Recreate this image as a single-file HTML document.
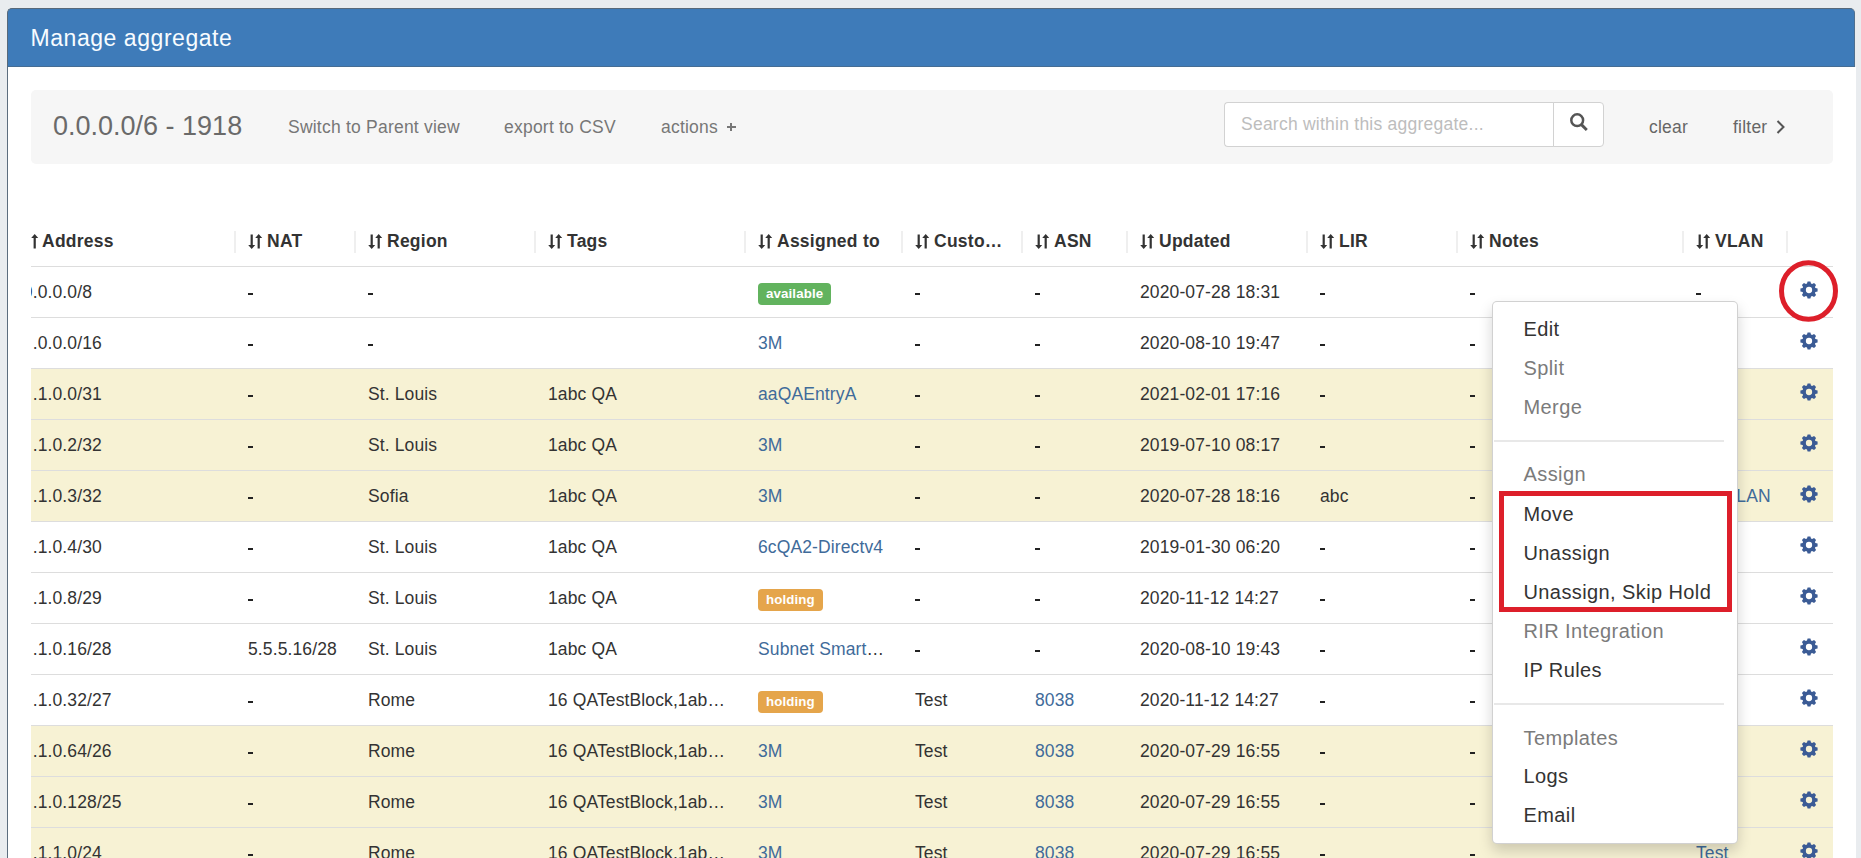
<!DOCTYPE html>
<html><head><meta charset="utf-8"><title>Manage aggregate</title>
<style>
html,body{margin:0;padding:0}
body{width:1861px;height:858px;overflow:hidden;background:#e9ecef;position:relative;font-family:"Liberation Sans",sans-serif;color:#333}
.abs{position:absolute}
#pbody{position:absolute;left:7px;top:67px;width:1849px;height:800px;box-sizing:border-box;border-left:1px solid #5c6d7e;background:#fff}
#phead{position:absolute;left:7px;top:8px;width:1848px;height:59px;box-sizing:border-box;background:#3e7bb9;border-top:1px solid #58697a;border-left:1px solid #58697a;border-right:1px solid #4f6f8f;border-bottom:1px solid #456d94;border-radius:5px 5px 0 0}
#ptitle{position:absolute;left:22.5px;top:16px;font-size:23px;letter-spacing:0.55px;line-height:26px;color:#f7fcff;white-space:nowrap}
#well{position:absolute;left:31px;top:90px;width:1802px;height:74px;background:#f6f6f6;border-radius:5px}
.wt{position:absolute;white-space:nowrap;color:#777;font-size:17.5px;letter-spacing:0.22px;line-height:20px}
#agg{position:absolute;left:53px;top:111px;font-size:27px;line-height:30px;color:#6a6a6a;white-space:nowrap}
#search{position:absolute;left:1224px;top:102px;width:330px;height:45px;box-sizing:border-box;border:1px solid #d2d2d2;border-right:none;border-radius:4px 0 0 4px;background:#fff}
#sbtn{position:absolute;left:1553px;top:102px;width:51px;height:45px;box-sizing:border-box;border:1px solid #d2d2d2;border-radius:0 4px 4px 0;background:#fff}
#ph{position:absolute;left:1241px;top:114px;font-size:17.5px;letter-spacing:0.24px;line-height:20px;color:#bdbdbd;white-space:nowrap}
#tbl{position:absolute;left:31px;top:200px;width:1802px;height:700px;overflow:hidden}
.hd{position:absolute;top:0;font-weight:bold;font-size:17.5px;letter-spacing:0.25px;line-height:20px;white-space:nowrap;color:#333}
.sep{position:absolute;width:2px;top:31px;height:22px;background:#efefef}
.row{position:absolute;left:0;width:1802px;height:50px;border-top:1px solid #ddd}
.y{background:#f7f2d4}
.c{position:absolute;top:0;line-height:50px;font-size:17.5px;letter-spacing:0.12px;white-space:nowrap;color:#333}
.c a{color:#3f6b9a;text-decoration:none}
.lbl{display:inline-block;vertical-align:top;margin-top:16px;height:22px;line-height:22px;padding:0 8px;border-radius:4px;color:#fff;font-weight:bold;font-size:13.3px}
.g{background:#62b35e}
.o{background:#e5a54b}
.si{position:absolute;top:34px}
.gear{position:absolute}
.dash{position:absolute;top:26px;width:5px;height:2px;background:#222}
#menu{position:absolute;left:1492px;top:301px;width:246px;height:543px;box-sizing:border-box;background:#fff;border:1px solid rgba(0,0,0,.18);border-radius:5px;box-shadow:0 7px 14px rgba(0,0,0,.17)}
.mi{position:absolute;left:30.5px;font-size:20px;letter-spacing:0.4px;line-height:24px;white-space:nowrap;color:#333}
.dis{color:#7b7b7b}
.div{position:absolute;left:1px;width:230px;height:2px;background:#e8e8e8}
</style></head><body>
<svg width="0" height="0" style="position:absolute"><defs>
<g id="cog"><path fill="#3b5b95" fill-rule="evenodd" d="M-2.00 -6.39 L-1.40 -8.59 L1.40 -8.59 L2.00 -6.39 L3.11 -5.94 L5.08 -7.06 L7.06 -5.08 L5.94 -3.11 L6.39 -2.00 L8.59 -1.40 L8.59 1.40 L6.39 2.00 L5.94 3.11 L7.06 5.08 L5.08 7.06 L3.11 5.94 L2.00 6.39 L1.40 8.59 L-1.40 8.59 L-2.00 6.39 L-3.11 5.94 L-5.08 7.06 L-7.06 5.08 L-5.94 3.11 L-6.39 2.00 L-8.59 1.40 L-8.59 -1.40 L-6.39 -2.00 L-5.94 -3.11 L-7.06 -5.08 L-5.08 -7.06 L-3.11 -5.94Z M3.15 0 A3.15 3.15 0 1 0 -3.15 0 A3.15 3.15 0 1 0 3.15 0Z"/></g>
</defs></svg>
<div id="pbody"></div>
<div id="phead"><div id="ptitle">Manage aggregate</div></div>
<div id="well"></div>
<div id="agg">0.0.0.0/6 - 1918</div>
<div class="wt" style="left:288px;top:117px">Switch to Parent view</div>
<div class="wt" style="left:504px;top:117px">export to CSV</div>
<div class="wt" style="left:661px;top:117px">actions</div><div class="abs" style="left:727px;top:126px;width:8.5px;height:2px;background:#777"></div><div class="abs" style="left:730.2px;top:123px;width:2px;height:8px;background:#777"></div>
<div id="search"></div><div id="sbtn"></div>
<div id="ph">Search within this aggregate...</div>
<svg class="abs" style="left:1565px;top:108px" width="26" height="26" viewBox="1565 108 26 26"><circle cx="1577.2" cy="120.2" r="5.9" fill="none" stroke="#555" stroke-width="2.5"/><path d="M1581.2 124.4l5.6 5.6" stroke="#555" stroke-width="2.9"/></svg>
<div class="wt" style="left:1649px;top:117px;color:#666">clear</div>
<div class="wt" style="left:1733px;top:117px;color:#666">filter</div>
<svg class="abs" style="left:1775px;top:119px" width="12" height="16" viewBox="0 0 12 16"><path d="M2.5 2l6 6-6 6" fill="none" stroke="#555" stroke-width="2"/></svg>

<div id='tbl'>
<svg class='si' style='left:0px' width='16' height='16' viewBox='0 0 16 16'><path d='M2.6 14.5h2.2V4h2.4L3.7 0 0.2 4h2.4z' fill='#333'/></svg>
<div class='hd' style='left:11px;top:31px'>Address</div>
<svg class='si' style='left:217px' width='16' height='16' viewBox='0 0 16 16'><path d='M2.6 0.5h2.2v10.5h2.4L3.7 15 0.2 11h2.4z' fill='#333'/><path d='M9.6 14.5h2.2V4h2.4L10.7 0 7.2 4h2.4z' fill='#333'/></svg>
<div class='hd' style='left:236px;top:31px'>NAT</div>
<div class='sep' style='left:203px'></div>
<svg class='si' style='left:337px' width='16' height='16' viewBox='0 0 16 16'><path d='M2.6 0.5h2.2v10.5h2.4L3.7 15 0.2 11h2.4z' fill='#333'/><path d='M9.6 14.5h2.2V4h2.4L10.7 0 7.2 4h2.4z' fill='#333'/></svg>
<div class='hd' style='left:356px;top:31px'>Region</div>
<div class='sep' style='left:323px'></div>
<svg class='si' style='left:517px' width='16' height='16' viewBox='0 0 16 16'><path d='M2.6 0.5h2.2v10.5h2.4L3.7 15 0.2 11h2.4z' fill='#333'/><path d='M9.6 14.5h2.2V4h2.4L10.7 0 7.2 4h2.4z' fill='#333'/></svg>
<div class='hd' style='left:536px;top:31px'>Tags</div>
<div class='sep' style='left:503px'></div>
<svg class='si' style='left:727px' width='16' height='16' viewBox='0 0 16 16'><path d='M2.6 0.5h2.2v10.5h2.4L3.7 15 0.2 11h2.4z' fill='#333'/><path d='M9.6 14.5h2.2V4h2.4L10.7 0 7.2 4h2.4z' fill='#333'/></svg>
<div class='hd' style='left:746px;top:31px'>Assigned to</div>
<div class='sep' style='left:713px'></div>
<svg class='si' style='left:884px' width='16' height='16' viewBox='0 0 16 16'><path d='M2.6 0.5h2.2v10.5h2.4L3.7 15 0.2 11h2.4z' fill='#333'/><path d='M9.6 14.5h2.2V4h2.4L10.7 0 7.2 4h2.4z' fill='#333'/></svg>
<div class='hd' style='left:903px;top:31px'>Custo…</div>
<div class='sep' style='left:870px'></div>
<svg class='si' style='left:1004px' width='16' height='16' viewBox='0 0 16 16'><path d='M2.6 0.5h2.2v10.5h2.4L3.7 15 0.2 11h2.4z' fill='#333'/><path d='M9.6 14.5h2.2V4h2.4L10.7 0 7.2 4h2.4z' fill='#333'/></svg>
<div class='hd' style='left:1023px;top:31px'>ASN</div>
<div class='sep' style='left:990px'></div>
<svg class='si' style='left:1109px' width='16' height='16' viewBox='0 0 16 16'><path d='M2.6 0.5h2.2v10.5h2.4L3.7 15 0.2 11h2.4z' fill='#333'/><path d='M9.6 14.5h2.2V4h2.4L10.7 0 7.2 4h2.4z' fill='#333'/></svg>
<div class='hd' style='left:1128px;top:31px'>Updated</div>
<div class='sep' style='left:1095px'></div>
<svg class='si' style='left:1289px' width='16' height='16' viewBox='0 0 16 16'><path d='M2.6 0.5h2.2v10.5h2.4L3.7 15 0.2 11h2.4z' fill='#333'/><path d='M9.6 14.5h2.2V4h2.4L10.7 0 7.2 4h2.4z' fill='#333'/></svg>
<div class='hd' style='left:1308px;top:31px'>LIR</div>
<div class='sep' style='left:1275px'></div>
<svg class='si' style='left:1439px' width='16' height='16' viewBox='0 0 16 16'><path d='M2.6 0.5h2.2v10.5h2.4L3.7 15 0.2 11h2.4z' fill='#333'/><path d='M9.6 14.5h2.2V4h2.4L10.7 0 7.2 4h2.4z' fill='#333'/></svg>
<div class='hd' style='left:1458px;top:31px'>Notes</div>
<div class='sep' style='left:1425px'></div>
<svg class='si' style='left:1665px' width='16' height='16' viewBox='0 0 16 16'><path d='M2.6 0.5h2.2v10.5h2.4L3.7 15 0.2 11h2.4z' fill='#333'/><path d='M9.6 14.5h2.2V4h2.4L10.7 0 7.2 4h2.4z' fill='#333'/></svg>
<div class='hd' style='left:1684px;top:31px'>VLAN</div>
<div class='sep' style='left:1651px'></div>
<div class='sep' style='left:1755px'></div>
<div class='row' style='top:66px'>
<div class='c' style='left:-8.2px'>0.0.0.0/8</div>
<div class='dash' style='left:217px'></div>
<div class='dash' style='left:337px'></div>
<div class='c' style='left:727px'><span class='lbl g'>available</span></div>
<div class='dash' style='left:884px'></div>
<div class='dash' style='left:1004px'></div>
<div class='c' style='left:1109px'>2020-07-28 18:31</div>
<div class='dash' style='left:1289px'></div>
<div class='dash' style='left:1439px'></div>
<div class='dash' style='left:1665px'></div>
</div>
<div class='row' style='top:117px'>
<div class='c' style='left:-8.2px'><span style='visibility:hidden'>1</span>.0.0.0/16</div>
<div class='dash' style='left:217px'></div>
<div class='dash' style='left:337px'></div>
<div class='c' style='left:727px'><a>3M</a></div>
<div class='dash' style='left:884px'></div>
<div class='dash' style='left:1004px'></div>
<div class='c' style='left:1109px'>2020-08-10 19:47</div>
<div class='dash' style='left:1289px'></div>
<div class='dash' style='left:1439px'></div>
</div>
<div class='row y' style='top:168px'>
<div class='c' style='left:-8.2px'><span style='visibility:hidden'>1</span>.1.0.0/31</div>
<div class='dash' style='left:217px'></div>
<div class='c' style='left:337px'>St. Louis</div>
<div class='c' style='left:517px'>1abc QA</div>
<div class='c' style='left:727px'><a>aaQAEntryA</a></div>
<div class='dash' style='left:884px'></div>
<div class='dash' style='left:1004px'></div>
<div class='c' style='left:1109px'>2021-02-01 17:16</div>
<div class='dash' style='left:1289px'></div>
<div class='dash' style='left:1439px'></div>
</div>
<div class='row y' style='top:219px'>
<div class='c' style='left:-8.2px'><span style='visibility:hidden'>1</span>.1.0.2/32</div>
<div class='dash' style='left:217px'></div>
<div class='c' style='left:337px'>St. Louis</div>
<div class='c' style='left:517px'>1abc QA</div>
<div class='c' style='left:727px'><a>3M</a></div>
<div class='dash' style='left:884px'></div>
<div class='dash' style='left:1004px'></div>
<div class='c' style='left:1109px'>2019-07-10 08:17</div>
<div class='dash' style='left:1289px'></div>
<div class='dash' style='left:1439px'></div>
</div>
<div class='row y' style='top:270px'>
<div class='c' style='left:-8.2px'><span style='visibility:hidden'>1</span>.1.0.3/32</div>
<div class='dash' style='left:217px'></div>
<div class='c' style='left:337px'>Sofia</div>
<div class='c' style='left:517px'>1abc QA</div>
<div class='c' style='left:727px'><a>3M</a></div>
<div class='dash' style='left:884px'></div>
<div class='dash' style='left:1004px'></div>
<div class='c' style='left:1109px'>2020-07-28 18:16</div>
<div class='c' style='left:1289px'>abc</div>
<div class='dash' style='left:1439px'></div>
<div class='c' style='left:1665px'><a>abcVLAN</a></div>
</div>
<div class='row' style='top:321px'>
<div class='c' style='left:-8.2px'><span style='visibility:hidden'>1</span>.1.0.4/30</div>
<div class='dash' style='left:217px'></div>
<div class='c' style='left:337px'>St. Louis</div>
<div class='c' style='left:517px'>1abc QA</div>
<div class='c' style='left:727px'><a>6cQA2-Directv4</a></div>
<div class='dash' style='left:884px'></div>
<div class='dash' style='left:1004px'></div>
<div class='c' style='left:1109px'>2019-01-30 06:20</div>
<div class='dash' style='left:1289px'></div>
<div class='dash' style='left:1439px'></div>
</div>
<div class='row' style='top:372px'>
<div class='c' style='left:-8.2px'><span style='visibility:hidden'>1</span>.1.0.8/29</div>
<div class='dash' style='left:217px'></div>
<div class='c' style='left:337px'>St. Louis</div>
<div class='c' style='left:517px'>1abc QA</div>
<div class='c' style='left:727px'><span class='lbl o'>holding</span></div>
<div class='dash' style='left:884px'></div>
<div class='dash' style='left:1004px'></div>
<div class='c' style='left:1109px'>2020-11-12 14:27</div>
<div class='dash' style='left:1289px'></div>
<div class='dash' style='left:1439px'></div>
</div>
<div class='row' style='top:423px'>
<div class='c' style='left:-8.2px'><span style='visibility:hidden'>1</span>.1.0.16/28</div>
<div class='c' style='left:217px'>5.5.5.16/28</div>
<div class='c' style='left:337px'>St. Louis</div>
<div class='c' style='left:517px'>1abc QA</div>
<div class='c' style='left:727px'><a>Subnet Smart</a>…</div>
<div class='dash' style='left:884px'></div>
<div class='dash' style='left:1004px'></div>
<div class='c' style='left:1109px'>2020-08-10 19:43</div>
<div class='dash' style='left:1289px'></div>
<div class='dash' style='left:1439px'></div>
</div>
<div class='row' style='top:474px'>
<div class='c' style='left:-8.2px'><span style='visibility:hidden'>1</span>.1.0.32/27</div>
<div class='dash' style='left:217px'></div>
<div class='c' style='left:337px'>Rome</div>
<div class='c' style='left:517px'>16 QATestBlock,1ab…</div>
<div class='c' style='left:727px'><span class='lbl o'>holding</span></div>
<div class='c' style='left:884px'>Test</div>
<div class='c' style='left:1004px'><a>8038</a></div>
<div class='c' style='left:1109px'>2020-11-12 14:27</div>
<div class='dash' style='left:1289px'></div>
<div class='dash' style='left:1439px'></div>
</div>
<div class='row y' style='top:525px'>
<div class='c' style='left:-8.2px'><span style='visibility:hidden'>1</span>.1.0.64/26</div>
<div class='dash' style='left:217px'></div>
<div class='c' style='left:337px'>Rome</div>
<div class='c' style='left:517px'>16 QATestBlock,1ab…</div>
<div class='c' style='left:727px'><a>3M</a></div>
<div class='c' style='left:884px'>Test</div>
<div class='c' style='left:1004px'><a>8038</a></div>
<div class='c' style='left:1109px'>2020-07-29 16:55</div>
<div class='dash' style='left:1289px'></div>
<div class='dash' style='left:1439px'></div>
</div>
<div class='row y' style='top:576px'>
<div class='c' style='left:-8.2px'><span style='visibility:hidden'>1</span>.1.0.128/25</div>
<div class='dash' style='left:217px'></div>
<div class='c' style='left:337px'>Rome</div>
<div class='c' style='left:517px'>16 QATestBlock,1ab…</div>
<div class='c' style='left:727px'><a>3M</a></div>
<div class='c' style='left:884px'>Test</div>
<div class='c' style='left:1004px'><a>8038</a></div>
<div class='c' style='left:1109px'>2020-07-29 16:55</div>
<div class='dash' style='left:1289px'></div>
<div class='dash' style='left:1439px'></div>
</div>
<div class='row y' style='top:627px'>
<div class='c' style='left:-8.2px'><span style='visibility:hidden'>1</span>.1.1.0/24</div>
<div class='dash' style='left:217px'></div>
<div class='c' style='left:337px'>Rome</div>
<div class='c' style='left:517px'>16 QATestBlock,1ab…</div>
<div class='c' style='left:727px'><a>3M</a></div>
<div class='c' style='left:884px'>Test</div>
<div class='c' style='left:1004px'><a>8038</a></div>
<div class='c' style='left:1109px'>2020-07-29 16:55</div>
<div class='dash' style='left:1289px'></div>
<div class='dash' style='left:1439px'></div>
<div class='c' style='left:1665px'><a>Test</a></div>
</div>
</div>
<svg class='gear' style='left:1799.5px;top:281px' width='18' height='18' viewBox='-9 -9 18 18'><use href='#cog'/></svg>
<svg class='gear' style='left:1799.5px;top:332px' width='18' height='18' viewBox='-9 -9 18 18'><use href='#cog'/></svg>
<svg class='gear' style='left:1799.5px;top:383px' width='18' height='18' viewBox='-9 -9 18 18'><use href='#cog'/></svg>
<svg class='gear' style='left:1799.5px;top:434px' width='18' height='18' viewBox='-9 -9 18 18'><use href='#cog'/></svg>
<svg class='gear' style='left:1799.5px;top:485px' width='18' height='18' viewBox='-9 -9 18 18'><use href='#cog'/></svg>
<svg class='gear' style='left:1799.5px;top:536px' width='18' height='18' viewBox='-9 -9 18 18'><use href='#cog'/></svg>
<svg class='gear' style='left:1799.5px;top:587px' width='18' height='18' viewBox='-9 -9 18 18'><use href='#cog'/></svg>
<svg class='gear' style='left:1799.5px;top:638px' width='18' height='18' viewBox='-9 -9 18 18'><use href='#cog'/></svg>
<svg class='gear' style='left:1799.5px;top:689px' width='18' height='18' viewBox='-9 -9 18 18'><use href='#cog'/></svg>
<svg class='gear' style='left:1799.5px;top:740px' width='18' height='18' viewBox='-9 -9 18 18'><use href='#cog'/></svg>
<svg class='gear' style='left:1799.5px;top:791px' width='18' height='18' viewBox='-9 -9 18 18'><use href='#cog'/></svg>
<svg class='gear' style='left:1799.5px;top:842px' width='18' height='18' viewBox='-9 -9 18 18'><use href='#cog'/></svg>
<svg class='abs' style='left:1775px;top:256px' width='68' height='70' viewBox='0 0 68 70'><ellipse cx='33.5' cy='35' rx='27' ry='28.3' fill='none' stroke='#dd1f2a' stroke-width='5'/></svg>
<div id='menu'>
<div class='mi' style='top:14.7px'>Edit</div>
<div class='mi dis' style='top:53.7px'>Split</div>
<div class='mi dis' style='top:92.7px'>Merge</div>
<div class='mi dis' style='top:160.4px'>Assign</div>
<div class='mi' style='top:199.8px'>Move</div>
<div class='mi' style='top:238.7px'>Unassign</div>
<div class='mi' style='top:277.9px'>Unassign, Skip Hold</div>
<div class='mi dis' style='top:317.3px'>RIR Integration</div>
<div class='mi' style='top:356.1px'>IP Rules</div>
<div class='mi dis' style='top:423.6px'>Templates</div>
<div class='mi' style='top:462.1px'>Logs</div>
<div class='mi' style='top:501.1px'>Email</div>
<div class='div' style='top:138px'></div>
<div class='div' style='top:401px'></div>
</div>
<div class='abs' style='left:1499px;top:491px;width:233px;height:121px;box-sizing:border-box;border:5px solid #dd1f2a'></div>
</body></html>
